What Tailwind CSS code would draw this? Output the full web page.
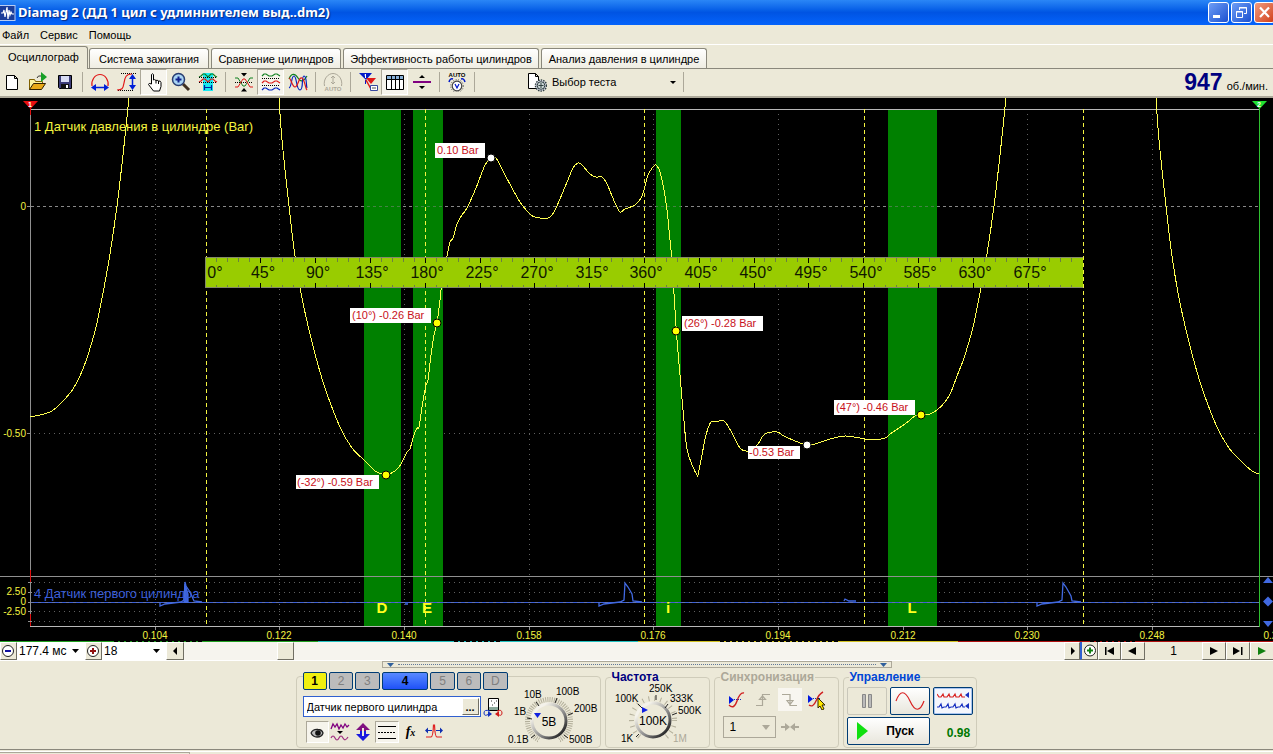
<!DOCTYPE html>
<html lang="ru">
<head>
<meta charset="utf-8">
<title>Diamag 2</title>
<script src="https://cdn.jsdelivr.net/npm/@tailwindcss/browser@4"></script>
</head>
<body class="min-h-screen flex flex-col overflow-x-hidden bg-[#ece9d8] text-black text-[11px] leading-[14px]" style="font-family:'Liberation Sans',Arial,sans-serif">

<!-- Title bar -->
<header class="h-[25px] flex items-center shrink-0 bg-linear-to-b from-[#2a86f6] via-[#0054e3] to-[#0563fb]">
  <svg class="w-4 h-4 shrink-0" viewBox="0 0 16 16"><rect x="-1" y=".5" width="16" height="15" fill="#1b3d9a" stroke="#b9cdf2"/><path d="M1 8h2l1-3 1 7 2-10 1 12 1-9 1 5 1-3 1 2h2" fill="none" stroke="#fff" stroke-width="1.2"/></svg>
  <h1 class="flex-1 pl-[2px] text-white font-bold text-[13px] leading-[25px] whitespace-nowrap [text-shadow:1px_1px_1px_#0a2a80]" style="font-family:'Noto Sans','Open Sans',sans-serif">Diamag 2 (ДД 1 цил с удлиннителем выд..dm2)</h1>
  <div class="flex gap-[2px] overflow-hidden w-[65px] shrink-0">
    <button aria-label="Свернуть" class="w-[21px] h-[21px] shrink-0 rounded-[3px] border border-white bg-linear-to-br from-[#6f9df5] to-[#1b4fd0]"><svg class="w-full h-full" viewBox="0 0 19 19"><rect x="4" y="12" width="7" height="3" fill="#fff"/></svg></button>
    <button aria-label="Восстановить" class="w-[21px] h-[21px] shrink-0 rounded-[3px] border border-white bg-linear-to-br from-[#6f9df5] to-[#1b4fd0]"><svg class="w-full h-full" viewBox="0 0 19 19" fill="none" stroke="#fff"><path d="M7.500 7V4.500h7v6H12M7 5h8M4.500 8.500h6v6h-6zM4 9h7"/></svg></button>
    <button aria-label="Закрыть" class="w-[21px] h-[21px] shrink-0 rounded-[3px] border border-white bg-linear-to-br from-[#f09a7c] to-[#d03c10]"><svg class="w-full h-full" viewBox="0 0 19 19" stroke="#fff" stroke-width="2.200"><path d="M5 4.500l9 9.500M14 4.500l-9 9.500"/></svg></button>
  </div>
</header>

<!-- Menu -->
<nav class="h-5 flex items-center gap-[11px] pl-[2px] shrink-0 border-b border-white">
  <a href="#">Файл</a><a href="#">Сервис</a><a href="#">Помощь</a>
</nav>

<!-- Tabs -->
<div role="tablist" class="h-6 flex items-end shrink-0 border-b border-[#8a887c] whitespace-nowrap">
  <button role="tab" aria-selected="true" class="w-[88px] h-[23px] -mb-px bg-[#ece9d8] border-t border-r border-[#8a887c] rounded-tr-[3px] pb-[2px]">Осциллограф</button>
  <button role="tab" class="ml-px w-[120px] h-5 bg-linear-to-b from-white to-[#efede2] border border-b-0 border-[#8a887c] rounded-t-[3px]">Система зажигания</button>
  <button role="tab" class="ml-[2px] w-[130px] h-5 bg-linear-to-b from-white to-[#efede2] border border-b-0 border-[#8a887c] rounded-t-[3px]">Сравнение цилиндров</button>
  <button role="tab" class="ml-[2px] w-[196px] h-5 bg-linear-to-b from-white to-[#efede2] border border-b-0 border-[#8a887c] rounded-t-[3px]">Эффективность работы цилиндров</button>
  <button role="tab" class="ml-[2px] w-[166px] h-5 bg-linear-to-b from-white to-[#efede2] border border-b-0 border-[#8a887c] rounded-t-[3px]">Анализ давления в цилиндре</button>
</div>

<!-- Toolbar -->
<div role="toolbar" class="h-[29px] flex items-center shrink-0 border-b-2 border-[#aca899] pb-px">
  <button aria-label="Новый" class="w-6 h-[26px] shrink-0 grid place-items-center"><svg class="w-5 h-5" viewBox="0 0 20 20"><path d="M4.500 3.500h8l3 3v11h-11zM12.500 3.500v3h3" fill="#fff" stroke="#000"/></svg></button>
  <button aria-label="Открыть" class="w-[27px] h-[26px] shrink-0 grid place-items-center"><svg class="w-5 h-5" viewBox="0 0 20 20"><path d="M1.500 17.500v-10h5l1 2h7v3" fill="#fbf3a0" stroke="#806000"/><path d="M1.500 17.500l4-6h12l-4 6z" fill="#e8a818" stroke="#302000"/><path d="M9 6q1-3 4-2" fill="none" stroke="#333"/><path d="M13 0l6 5-6 5z" fill="#18a028"/></svg></button>
  <button aria-label="Сохранить" class="w-[27px] h-[26px] shrink-0 grid place-items-center"><svg class="w-5 h-5" viewBox="0 0 20 20"><path d="M3.500 3.500h13v13h-12l-1-1z" fill="#3c3c78" stroke="#000"/><path d="M6 4h8v6H6z" fill="#d8dcf4"/><path d="M6 12h8v5H6z" fill="#111"/><path d="M11 13h2v3h-2z" fill="#fff"/></svg></button>
  <span class="w-2 h-5 shrink-0 flex justify-center"><i class="w-px bg-[#aca899]"></i></span>
  <button aria-label="Растянуть по ширине" class="w-[27px] h-[26px] shrink-0 grid place-items-center"><svg class="w-5 h-5" viewBox="0 0 20 20"><path d="M2 14C1 8 5 2.500 10 2.500S19 8 18 14" fill="none" stroke="#e01818" stroke-width="1.200"/><path d="M4 15.500h12" stroke="#0020d8" stroke-width="1.500"/><path d="M1 15.500l5-3.500v7zM19 15.500l-5-3.500v7z" fill="#0020d8"/></svg></button>
  <button aria-label="Растянуть по высоте" class="w-[27px] h-[26px] shrink-0 grid place-items-center"><svg class="w-5 h-5" viewBox="0 0 20 20"><path d="M4 1.500h15M1 18.500h16" stroke="#000" stroke-dasharray="1 1"/><path d="M0 18c5 0 6-1 7-7S9 2 15 2" fill="none" stroke="#e01818" stroke-width="1.200"/><path d="M15.500 6v8" stroke="#0020d8" stroke-width="1.500"/><path d="M15.500 2l3.500 5h-7zM15.500 18l3.500-5h-7z" fill="#0020d8"/></svg></button>
  <button aria-label="Рука" aria-pressed="true" class="w-[27px] h-[26px] shrink-0 grid place-items-center bg-[#f6f4ec] border border-[#aca899] border-r-white border-b-white"><svg class="w-5 h-5" viewBox="0 0 20 20"><path d="M7.500 12V2.500q1-1.500 2 0V8q1-1 2.500.500q1-.800 2.500.500q2-.500 2.500 1.500v4l-1.500 4.500h-6l-5-6.500q0-2 3-.500z" fill="#fff" stroke="#000"/><path d="M12 8.500v3M14.500 9v3" stroke="#000"/></svg></button>
  <button aria-label="Масштаб" class="w-[27px] h-[26px] shrink-0 grid place-items-center"><svg class="w-5 h-5" viewBox="0 0 20 20"><path d="M12 12l6 6" stroke="#403020" stroke-width="3"/><circle cx="7.500" cy="7.500" r="6" fill="#a8d4f4" stroke="#283c70" stroke-width="1.500"/><path d="M4.500 7.500h6M7.500 4.500v6" stroke="#10208c" stroke-width="2"/></svg></button>
  <button aria-label="Измерение" class="w-[27px] h-[26px] shrink-0 grid place-items-center"><svg class="w-5 h-5" viewBox="0 0 20 20"><path d="M5 1h10v18H5z" fill="#18e8f0"/><path d="M1 5l2-1 2-2h2l3 3 3-3h2l2 2 2 1" fill="none" stroke="#108020" stroke-width="1.200"/><path d="M1 10l2-1 2-2h2l3 3 3-3h2l2 2 2 1" fill="none" stroke="#e01818" stroke-width="1.200"/><path d="M1 5.500h18M1 10.500h18" stroke="#000" stroke-dasharray="1 1"/><path d="M6.500 13v5M13.500 13v5M7 15.500h6" stroke="#0020a0" stroke-width="1.200"/></svg></button>
  <span class="w-[9px] h-5 shrink-0 flex justify-center"><i class="w-px bg-[#aca899]"></i></span>
  <button aria-label="Совместить" class="w-[27px] h-[26px] shrink-0 grid place-items-center"><svg class="w-5 h-5" viewBox="0 0 20 20" fill="none"><path d="M1 10.500h18" stroke="#000" stroke-dasharray="1 1"/><path d="M1 6h3l3 5 2 3h2l2-3 3-5h3" stroke="#108020"/><path d="M1 15h3l3-5 2-3h2l2 3 3 5h3" stroke="#e01818"/><path d="M7 1h6l-3 3.500zM7 19.500h6L10 16z" fill="#000"/></svg></button>
  <button aria-label="Раздельно" aria-pressed="true" class="w-[27px] h-[26px] shrink-0 grid place-items-center bg-[#f6f4ec] border border-[#aca899] border-r-white border-b-white"><svg class="w-5 h-5" viewBox="0 0 20 20" fill="none" stroke-width="1.200"><path d="M1 4l2-2h2l3 2h3l3-2h2l3 2" stroke="#108020"/><path d="M1 11l2-2h2l3 2h3l3-2h2l3 2" stroke="#e01818"/><path d="M1 18l2-2h2l3 2h3l3-2h2l3 2" stroke="#0020c0"/><path d="M1 6.500h18M1 13.500h18" stroke="#000" stroke-dasharray="1 1" stroke-width="1"/></svg></button>
  <button aria-label="Наложить" class="w-[27px] h-[26px] shrink-0 grid place-items-center"><svg class="w-5 h-5" viewBox="0 0 20 20" fill="none" stroke-width="1.200"><path d="M1 7c2-6 6-6 9-1s6 3 9-2" stroke="#108020"/><path d="M1 16c3-1 2-12 5-12s2 14 6 14 1-14 4-14 2 10 3 12" stroke="#0020c0"/><path d="M1 6c2 0 3 9 6 9s4-11 7-9 3 10 5 12" stroke="#e01818"/></svg></button>
  <span class="w-2 h-5 shrink-0 flex justify-center"><i class="w-px bg-[#aca899]"></i></span>
  <button aria-label="Авто" disabled class="w-[27px] h-[26px] shrink-0 grid place-items-center"><svg class="w-5 h-5" viewBox="0 0 20 20" fill="none" stroke="#aca899"><path d="M1.500 14C0 7 5 1.500 10 1.500S20 7 18.500 14M10 4v8M8 6l2-2 2 2M8 10l2 2 2-2"/><text x="10" y="19" text-anchor="middle" font-size="6" font-weight="bold" fill="#aca899" stroke="none">AUTO</text></svg></button>
  <span class="w-2 h-5 shrink-0 flex justify-center"><i class="w-px bg-[#aca899]"></i></span>
  <button aria-label="Метки" class="w-[27px] h-[26px] shrink-0 grid place-items-center"><svg class="w-5 h-5" viewBox="0 0 20 20"><path d="M1 1h13L8 8z" fill="#0018c8"/><path d="M7.500 2v4M6.500 3h1" stroke="#fff"/><path d="M8 6h10l-5 6z" fill="#e01818"/><path d="M7.500 8v4" stroke="#0018c8"/><path d="M8 8l5 9" stroke="#e01818" stroke-width="1.500"/><path d="M12.500 13.500h7v5h-7z" fill="#fff" stroke="#3848a0"/><path d="M14 16h4" stroke="#555"/></svg></button>
  <button aria-label="Таблица" aria-pressed="true" class="w-[27px] h-[26px] shrink-0 grid place-items-center bg-[#f6f4ec] border border-[#aca899] border-r-white border-b-white"><svg class="w-5 h-5" viewBox="0 0 20 20"><path d="M1.500 3.500h17v14h-17z" fill="#fff" stroke="#000"/><path d="M2 4h16v3H2z" fill="#88b0d8"/><path d="M1.500 7.500h17M6.500 4v13.500M10.500 4v13.500M14.500 4v13.500" stroke="#000"/></svg></button>
  <button aria-label="Разделитель" class="w-[27px] h-[26px] shrink-0 grid place-items-center"><svg class="w-5 h-5" viewBox="0 0 20 20"><path d="M1 10h18" stroke="#800080" stroke-width="2"/><path d="M7 6h6l-3-3zM7 14h6l-3 3z"/></svg></button>
  <span class="w-2 h-5 shrink-0 flex justify-center"><i class="w-px bg-[#aca899]"></i></span>
  <button aria-label="Авторежим" class="w-[27px] h-[26px] shrink-0 grid place-items-center"><svg class="w-5 h-5" viewBox="0 0 20 20"><text x="10" y="5" text-anchor="middle" font-size="6" font-weight="bold">AUTO</text><circle cx="10" cy="14" r="4.800" fill="#fff" stroke="#404040" stroke-width="1.200"/><circle cx="10" cy="14" r="6.300" fill="none" stroke="#555" stroke-dasharray="1 1.500"/><path d="M8 12l2 4 2-4" fill="none" stroke="#0018c8" stroke-width="1.200"/><path d="M2 10q1-4 4-3M18 10q-1-4-4-3" fill="none" stroke="#0018c8" stroke-width="1.500"/></svg></button>
  <span class="w-2 h-5 shrink-0 flex justify-center"><i class="w-px bg-[#aca899]"></i></span>
  <button class="ml-[49px] w-[156px] h-[26px] shrink-0 flex items-center text-left whitespace-nowrap">
    <svg class="w-5 h-5" viewBox="0 0 20 20"><path d="M1.500 1.500h7l3 3v12h-10zM8.500 1.500v3h3" fill="#fff" stroke="#000"/><circle cx="14" cy="13.500" r="5.500" fill="#dde" stroke="#304040" stroke-width="1.500" stroke-dasharray="1.500 1"/><circle cx="14" cy="13.500" r="3.800" fill="#cdd8d8" stroke="#304040"/><path d="M14 11v5M11.500 13.500h5" stroke="#304040"/></svg>
    <span class="flex-1 pl-[5px]">Выбор теста</span>
    <svg class="w-2 h-2 mr-[6px] shrink-0" viewBox="0 0 8 8"><path d="M1 3h6L4 6z"/></svg>
  </button>
  <i class="w-px h-5 shrink-0 bg-[#aca899]"></i>
  <p class="flex-1 flex items-baseline justify-end gap-1 pr-[5px] whitespace-nowrap"><b class="text-[23px] leading-6 text-[#000080]">947</b> об./мин.</p>
</div>

<!-- Oscilloscope screen -->
<main class="bg-black">
<svg id="scope" class="block w-full h-auto" viewBox="0 98 1273 544" fill="none">
  <g shape-rendering="crispEdges">
    <g id="grid" stroke="#606060" stroke-dasharray="1 4"></g>
    <path d="M31 206.500H1259" stroke="#888" stroke-dasharray="3 3"/>
    <path d="M364 110h37v516h-37zM413 110h30v516h-30zM656 110h25v516h-25zM888 110h49v516h-49z" fill="#008000"/>
    <path d="M31 206.500H1259" stroke="#888" stroke-dasharray="3 3" opacity=".5"/>
    <path d="M30 109.500H1259M30 626.500H1259" stroke="#b8b8b8"/>
    <path d="M0 576.500H1273" stroke="#909090"/>
    <path d="M30.500 109V626" stroke="#909090"/>
    <path d="M30.500 106v9M30.500 570v12M30.500 614v12" stroke="#e01010"/>
    <path d="M1259.500 106V627" stroke="#30c030"/>
    <path stroke="#909090" d="M27 206.500h4M27 433.500h4M28 582.500h4M28 592.500h4M28 602.500h4M28 611.500h4M28 621.500h4"/>
    <g id="ticks" stroke="#909090"></g>
    <path stroke="#f4f440" stroke-dasharray="4 3" d="M206.500 109V626M425.500 109V626M644.500 109V626M864.500 109V626M1083.500 109V626"/>
    <path stroke="#3c5fd8" d="M31 602.500H1259"/>
    <path stroke="#8a8a8a" stroke-dasharray="3 4" opacity=".5" d="M31 602.500H1259"/>
  </g>
  <g stroke="#4169e1" stroke-width="1.300">
    <path d="M160 602v4l5-2 8-1 8-1 3-2 1-18 1 4 4 6 4 9 8 1"/><path d="M184 602l1-18 3 10v8z" fill="#4169e1"/>
    <path d="M599 602v4l5-2 8-1 8-1 4-2 1-17 3 4 4 7 1 7 9 1"/>
    <path d="M1037 602v4l5-2 8-1 8-1 4-2 1-17 3 4 5 9 1 5 9 1"/>
    <path d="M844 601l1-2 4 2h7M405 604h3"/>
  </g>
  <g id="curves" stroke="#ffff50" shape-rendering="crispEdges"></g>

  <path d="M23 101h15l-7.500 8z" fill="#e81010"/><path d="M1252 101h15l-7.500 8z" fill="#20e030"/>
  <g fill="#fff" font-size="7" font-weight="bold" text-anchor="middle"><text x="30" y="107">1</text><text x="1259" y="107">2</text></g>

  <g font-size="13"><text x="34" y="131" fill="#f4f440">1 Датчик давления в цилиндре (Bar)</text><text x="34" y="598" fill="#3c5fd8">4 Датчик первого цилиндра</text></g>
  <g fill="#f4f440" font-size="10" text-anchor="end"><text x="26" y="210">0</text><text x="26" y="437">-0.50</text><text x="26" y="595">2.50</text><text x="26" y="605">0</text><text x="26" y="615">-2.50</text></g>
  <g id="times" fill="#f4f440" font-size="10" text-anchor="middle"></g>
  <g fill="#ffff20" font-size="15" font-weight="bold" text-anchor="middle"><text x="382" y="613">D</text><text x="427" y="613">E</text><text x="668" y="613">i</text><text x="912" y="613">L</text></g>

  <!-- Degree ruler -->
  <path d="M205 257h878v31H205z" fill="#99cc00"/>
  <path d="M205 257.500h878M205 287.500h878M205.500 257v31" stroke="#858a68"/>
  <g id="ruler" shape-rendering="crispEdges"></g>
  <g id="degrees" fill="#101800" font-size="16" text-anchor="middle"></g>

  <!-- Markers -->
  <path fill="#fff" d="M435 143h50v15h-50zM350 308h81v15h-81zM682 316h81v15h-81zM834 400h81v15h-81zM296 475h83v14h-83zM748 446h52v13h-52z"/>
  <g fill="#c81020" font-size="11"><text x="437" y="154">0.10 Bar</text><text x="352" y="319">(10°) -0.26 Bar</text><text x="684" y="327">(26°) -0.28 Bar</text><text x="836" y="411">(47°) -0.46 Bar</text><text x="297" y="486">(-32°) -0.59 Bar</text><text x="749" y="456">-0.53 Bar</text></g>
  <g stroke="#000"><g fill="#fff"><circle cx="491" cy="158" r="4"/><circle cx="807" cy="445" r="4"/></g><g fill="#ffff00"><circle cx="437" cy="323" r="4"/><circle cx="676" cy="331" r="4"/><circle cx="386" cy="475" r="4"/><circle cx="921" cy="415" r="4"/></g></g>

  <path fill="#4169e1" d="M1263 583h10l-5-6zM1263 601.500l5-5 5 5-5 5zM1263 621h10l-5 6z"/>
  <g shape-rendering="crispEdges"><path d="M0 641.500h318" stroke="#20a020"/><path d="M318 641.500h320" stroke="#20c0c0"/><path d="M638 641.500h320" stroke="#d0c020"/><path d="M958 641.500h315" stroke="#b01010"/>
  <path d="M114 641.500h90M454 641.500h48M720 641.500h120M1090 641.500h45" stroke="#000" stroke-dasharray="4 2"/></g>
</svg>
</main>

<!-- Scroll row -->
<div class="h-[18px] flex items-stretch shrink-0 bg-[#f6f4ee] text-[12px]">
  <button aria-label="Уменьшить" class="w-[17px] bg-[#ece9d8] border border-white border-r-[#716f64] border-b-[#716f64]"><svg class="w-full h-full" viewBox="0 0 15 16"><circle cx="7" cy="8" r="5.500" fill="#fff" stroke="#222"/><path d="M4 8h6" stroke="#1010a0" stroke-width="2"/></svg></button>
  <div class="relative w-[68px] flex"><select aria-label="Длительность" class="w-full pl-[2px] bg-white appearance-none"><option>177.4 мс</option></select><svg class="absolute right-[6px] top-[7px] w-[7px] h-1" viewBox="0 0 7 4"><path d="M0 0h7L3.500 4z"/></svg></div>
  <button aria-label="Увеличить" class="w-[17px] bg-[#ece9d8] border border-white border-r-[#716f64] border-b-[#716f64]"><svg class="w-full h-full" viewBox="0 0 15 16"><circle cx="7" cy="8" r="5.500" fill="#fff" stroke="#222"/><path d="M4 8h6M7 5v6" stroke="#901010" stroke-width="2"/></svg></button>
  <div class="relative w-[64px] flex"><select aria-label="Кадры" class="w-full pl-[2px] bg-white appearance-none"><option>18</option></select><svg class="absolute right-[6px] top-[7px] w-[7px] h-1" viewBox="0 0 7 4"><path d="M0 0h7L3.500 4z"/></svg></div>
  <button aria-label="Влево" class="w-[18px] bg-[#ece9d8] border border-white border-r-[#716f64] border-b-[#716f64]"><svg class="w-full h-full" viewBox="0 0 16 16"><path d="M10 4v8L6 8z"/></svg></button>
  <div class="flex-1 pl-[93px] flex"><span class="w-[17px] bg-[#ece9d8] border border-white border-r-[#716f64] border-b-[#716f64]"></span></div>
  <button aria-label="Вправо" class="w-4 bg-[#ece9d8] border border-white border-r-[#716f64] border-b-[#716f64]"><svg class="w-full h-full" viewBox="0 0 14 16"><path d="M6 4v8l4-4z"/></svg></button>
  <button aria-label="Добавить" class="w-[18px] bg-[#ece9d8] border-l-2 border-l-[#3060d0] border-r border-r-[#716f64] border-b border-b-[#716f64]"><svg class="w-full h-full" viewBox="0 0 15 16"><circle cx="8" cy="8" r="5.500" fill="#fff" stroke="#222"/><path d="M5 8h6M8 5v6" stroke="#108010" stroke-width="2"/></svg></button>
  <button aria-label="В начало" class="w-[23px] bg-[#ece9d8] border border-white border-r-[#716f64] border-b-[#716f64]"><svg class="w-full h-full" viewBox="0 0 21 16"><path d="M6 4h1.500v8H6zM15 4v8L8 8z"/></svg></button>
  <button aria-label="Назад" class="w-[24px] bg-[#ece9d8] border border-white border-r-[#716f64] border-b-[#716f64]"><svg class="w-full h-full" viewBox="0 0 22 16"><path d="M14 4v8L6 8z"/></svg></button>
  <span class="w-[57px] bg-[#ece9d8] text-center leading-[18px]">1</span>
  <button aria-label="Вперёд" class="w-[24px] bg-[#ece9d8] border border-white border-r-[#716f64] border-b-[#716f64]"><svg class="w-full h-full" viewBox="0 0 22 16"><path d="M7 4v8l8-4z"/></svg></button>
  <button aria-label="В конец" class="w-[24px] bg-[#ece9d8] border border-white border-r-[#716f64] border-b-[#716f64]"><svg class="w-full h-full" viewBox="0 0 22 16"><path d="M6 4v8l7-4zM14 4h1.500v8H14z"/></svg></button>
  <button aria-label="Воспроизвести" class="w-[23px] bg-[#ece9d8] border-l border-t border-white border-b border-b-[#716f64]"><svg class="w-full h-full" viewBox="0 0 22 16"><path d="M7 4v8l8-4z" fill="#108010"/></svg></button>
</div>

<!-- Splitter -->
<div class="h-2 flex justify-center items-end shrink-0 border-t border-white">
  <div class="w-[510px] h-[7px] border border-[#aca899] flex items-center px-1 gap-1">
    <svg class="w-[7px] h-1 shrink-0" viewBox="0 0 7 4"><path d="M0 0h7L3.500 4z" fill="#30609c"/></svg><i class="flex-1 border-t border-dotted border-[#607898]"></i><svg class="w-[7px] h-1 shrink-0" viewBox="0 0 7 4"><path d="M0 0h7L3.500 4z" fill="#30609c"/></svg>
  </div>
</div>

<!-- Control panels -->
<div class="flex justify-center items-end gap-1 shrink-0 pt-[3px] pb-px pr-px border-b border-[#8a887c]">
  <section aria-label="Канал" class="w-[305px] h-[72px] border border-[#cfccba] rounded-[4px] flex">
    <div class="w-[211px] shrink-0 pl-[6px] flex flex-col -mt-[5px]">
      <div class="h-[20px] flex gap-[2px] bg-[#ece9d8] text-[12px]">
        <button class="w-[25px] h-[18px] border border-[#003c74] rounded-[2px] bg-[#f0f010] font-bold">1</button>
        <button class="w-[25px] h-[18px] border border-[#003c74] rounded-[2px] bg-[#bcbcbc] text-[#808080]">2</button>
        <button class="w-[25px] h-[18px] border border-[#003c74] rounded-[2px] bg-[#bcbcbc] text-[#808080]">3</button>
        <button class="w-[48px] h-[18px] border border-[#003c74] rounded-[2px] bg-linear-to-b from-[#5888ff] to-[#2050f8] font-bold">4</button>
        <button class="w-[25px] h-[18px] border border-[#003c74] rounded-[2px] bg-[#bcbcbc] text-[#808080]">5</button>
        <button class="w-[25px] h-[18px] border border-[#003c74] rounded-[2px] bg-[#bcbcbc] text-[#808080]">6</button>
        <button class="w-[25px] h-[18px] border border-[#003c74] rounded-[2px] bg-[#bcbcbc] text-[#808080]">D</button>
      </div>
      <div class="mt-[4px] -mr-2 flex items-center gap-[2px]">
        <div class="w-[178px] h-[21px] flex bg-white border border-[#3060d0] p-px">
          <input aria-label="Датчик" value="Датчик первого цилиндра" class="flex-1 min-w-0 pl-[2px] outline-none">
          <button class="w-[17px] bg-[#ece9d8] border border-white border-r-[#716f64] border-b-[#716f64] font-bold leading-[10px]">...</button>
        </div>
        <button aria-label="Настройка датчика"><svg class="w-5 h-5 block" viewBox="0 0 20 20"><path d="M5.500 1.500h10v12h-10z" fill="#fff" stroke="#000"/><path d="M6 10h9v3H6z" fill="#8aa89a"/><path d="M8 4h1M11 6h1M13 4h1M9 8h1" stroke="#333"/><path d="M7 14q-6-2-6 2t5 1" fill="none" stroke="#1030c0"/><path d="M5 14l4 3-4 3z" fill="#1030c0"/><path d="M14 14q5-2 5 2t-5 1" fill="none" stroke="#d01818"/><path d="M16 14l-4 3 4 3z" fill="#d01818"/></svg></button>
      </div>
      <div class="mt-[4px] pl-[3px] flex gap-px">
        <button aria-label="Видимость" aria-pressed="true" class="w-[23px] h-[22px] shrink-0 grid place-items-center bg-[#f6f4ec] border border-[#aca899] border-r-white border-b-white"><svg class="w-5 h-5" viewBox="0 0 20 20"><path d="M4 11q2-4 7-3.500 4 0 5 3.500-1 4-6 4-4 0-6-4" fill="#bbb" stroke="#222" stroke-width="1.300"/><circle cx="11" cy="11" r="2.800" fill="#111"/></svg></button>
        <button aria-label="Фильтр" class="w-[21px] h-[22px] shrink-0 grid place-items-center"><svg class="w-5 h-5" viewBox="0 0 20 20"><path d="M1 7l2-5 2 3 2-3 2 5 2-4 2 3 2-4 2 3 2-2" stroke="#800080" stroke-width="1.300" fill="none"/><path d="M7 9h6l-3 3z"/><path d="M1 16q2-4 4 0t4 0 4 0 5-1" stroke="#a03080" stroke-width="1.200" fill="none"/></svg></button>
        <button aria-label="Инверсия" class="w-[22px] h-[22px] shrink-0 grid place-items-center"><svg class="w-5 h-5" viewBox="0 0 20 20"><path d="M10 1l7 7h-4v3H7V8H3z" fill="#801080"/><path d="M10 19l7-7h-4V9H7v3H3z" fill="#1818e0"/><path d="M10 6v8" stroke="#ece9d8" stroke-width="2"/></svg></button>
        <button aria-label="Уровни" aria-pressed="true" class="w-[24px] h-[22px] shrink-0 grid place-items-center bg-[#f6f4ec] border border-[#aca899] border-r-white border-b-white"><svg class="w-5 h-5" viewBox="0 0 20 20"><path d="M1 4.500h18M1 16.500h18" stroke="#000"/><path d="M1 10.500h18" stroke="#000" stroke-dasharray="2 1"/></svg></button>
        <button aria-label="Функция" class="w-[22px] h-[22px] shrink-0 text-[14px] italic font-bold leading-5" style="font-family:'Liberation Serif',serif">f<span class="text-[10px]">x</span></button>
        <button aria-label="Сдвиг" class="w-[22px] h-[22px] shrink-0 grid place-items-center"><svg class="w-5 h-5" viewBox="0 0 20 20"><path d="M2 15h5q2 0 2.500-12h1Q11 15 13 15h5" fill="none" stroke="#e02020" stroke-width="1.200"/><path d="M3 8.500h5M12 8.500h6" stroke="#1030b0"/><path d="M1 8.500l3-3v6zM19 8.500l-3-3v6z" fill="#1030b0"/></svg></button>
      </div>
    </div>
    <svg class="w-[92px] h-[62px] mt-[7px]" viewBox="508 684 92 62" font-size="10">
      <defs><linearGradient id="ring" x1="0" y1="0" x2="1" y2="1"><stop offset=".2" stop-color="#f4f2ea"/><stop offset=".6" stop-color="#888"/><stop offset="1" stop-color="#000"/></linearGradient></defs>
      <circle cx="549" cy="721" r="21.500" fill="none" stroke="#b4b09c" stroke-width="5" stroke-dasharray="1 1.200"/>
      <path d="M538 746h22v-6l-11-6-11 6z" fill="#ece9d8"/>
      <circle cx="549" cy="721" r="17" fill="#ece9d8" stroke="url(#ring)" stroke-width="3"/>
      <path d="M534 713h7l-3.500 5z" fill="#1020e0"/>
      <path d="M535 735l-4 3M527 718l5 1M536 702l3 4M557 698l-2 5M573 713l-5 2M564 735l4 3" stroke="#222"/>
      <text x="549" y="726" text-anchor="middle" font-size="12">5В</text>
      <text x="524" y="698">10В</text><text x="556" y="695">100В</text><text x="574" y="712">200В</text><text x="569" y="743">500В</text><text x="508" y="743">0.1В</text><text x="514" y="715">1В</text>
    </svg>
  </section>

  <fieldset class="w-[105px] h-[77px] border border-[#cfccba] rounded-[4px]">
    <legend class="ml-[5px] px-px text-[12px] leading-[12px] font-bold text-[#000080]">Частота</legend>
    <svg class="w-full h-[62px]" viewBox="605 684 103 62" font-size="10">
      <circle cx="652" cy="721" r="21.500" fill="none" stroke="#b4b09c" stroke-width="5" stroke-dasharray="1 5"/>
      <path d="M641 746h22v-6l-11-6-11 6z" fill="#ece9d8"/>
      <circle cx="652" cy="721" r="17" fill="#ece9d8" stroke="url(#ring)" stroke-width="3"/>
      <path d="M641 708l6 3-6 3z" fill="#1020e0"/>
      <path d="M638 735l-3 3M637 705l4 4M655 696v5M667 705l-3 4M676 714l-5 2" stroke="#222"/>
      <text x="652" y="726" text-anchor="middle" font-size="12">100K</text>
      <text x="648" y="693">250K</text><text x="614" y="703">100K</text><text x="669" y="703">333K</text><text x="677" y="715">500K</text><text x="620" y="743">1K</text><text x="672" y="743" fill="#aca899">1M</text>
    </svg>
  </fieldset>

  <fieldset class="w-[125px] h-[77px] border border-[#cfccba] rounded-[4px]">
    <legend class="ml-[5px] px-px text-[12px] leading-[12px] font-bold text-[#aca899]">Синхронизация</legend>
    <div class="mt-[5px] pl-[9px] flex gap-[3px]">
      <button aria-label="Уровень" class="w-6 h-[23px] grid place-items-center"><svg class="w-5 h-5" viewBox="0 0 20 20"><path d="M4 9.500h11" stroke="#1030c0" stroke-dasharray="1 1"/><path d="M3 15q5 5 8-4t7-8" fill="none" stroke="#d02020" stroke-width="1.400"/><path d="M3 6v8l5-4z" fill="#0018e0"/></svg></button>
      <button aria-label="По фронту" disabled class="w-6 h-[23px] grid place-items-center"><svg class="w-5 h-5" viewBox="0 0 20 20"><path d="M3 15.500h6.500v-11H17M6.500 9.500h6L9.500 6z" fill="none" stroke="#aca899" stroke-width="1.200"/></svg></button>
      <button aria-label="По спаду" disabled class="w-6 h-[23px] grid place-items-center bg-[#f8f6f0]"><svg class="w-5 h-5" viewBox="0 0 20 20"><path d="M2 4.500h8v11h7M7 10.500h6l-3 4z" fill="none" stroke="#aca899" stroke-width="1.200"/></svg></button>
      <button aria-label="Выбор уровня" class="w-6 h-[23px] grid place-items-center"><svg class="w-5 h-5" viewBox="0 0 20 20"><path d="M2 8.500h12" stroke="#1030c0" stroke-dasharray="1 1"/><path d="M2 15q4 3 7-4t7-9" fill="none" stroke="#d02020" stroke-width="1.400"/><path d="M1 5v8l5-4z" fill="#0018e0"/><path d="M11 8v10l2-2 2 4 2-1-2-4h3z" fill="#ffe800" stroke="#332800"/></svg></button>
    </div>
    <div class="mt-[5px] pl-2 flex items-center gap-1">
      <div class="relative"><select aria-label="Канал синхронизации" disabled class="w-[53px] h-[22px] pl-[6px] text-[12px] text-black opacity-100 bg-[#ece9d8] border border-[#aca899] appearance-none"><option>1</option></select><svg class="absolute right-[6px] top-[9px] w-2 h-[5px]" viewBox="0 0 8 5"><path d="M0 0h8L4 5z" fill="#aca899"/></svg></div>
      <svg class="w-5 h-5" viewBox="0 0 20 20"><path d="M1 9h4V6l5 4-5 4v-3H1zM19 9h-4V6l-5 4 5 4v-3h4z" fill="#aca899"/></svg>
    </div>
  </fieldset>

  <fieldset class="w-[134px] h-[77px] border border-[#cfccba] rounded-[4px]">
    <legend class="ml-[5px] px-px text-[12px] leading-[12px] font-bold text-[#0046d5]">Управление</legend>
    <div class="mt-1 pl-[3px] grid grid-cols-[40px_40px_40px] gap-x-[3px] gap-y-[2px]">
      <button aria-label="Пауза" disabled class="h-7 border border-[#c9c7ba] rounded-[2px] grid place-items-center"><svg class="w-5 h-5" viewBox="0 0 20 20"><path d="M5.500 3.500h3v13h-3zM11.500 3.500h3v13h-3z" fill="#bbb" stroke="#888"/></svg></button>
      <button aria-label="Синус" class="h-7 border border-[#003c74] rounded-[2px] grid place-items-center bg-linear-to-b from-white to-[#e8e6dc]"><svg class="w-8 h-5" viewBox="0 0 32 20"><path d="M2 10C6-1 11-1 16 10s10 11 14 0" fill="none" stroke="#d82020" stroke-width="1.200"/></svg></button>
      <button aria-label="Осциллограммы" class="h-7 border border-[#003c74] rounded-[2px] grid place-items-center bg-[#f4f6fc] shadow-[inset_0_0_0_1px_#a8c4f0]"><svg class="w-8 h-5" viewBox="0 0 32 20" fill="none"><path d="M0 3l2 3h2l2-3 1 3h3l2-3 1 3h3l2-3 1 3h3l2-3 1 3h3" stroke="#d82020" stroke-width="1.200"/><path d="M0 16h2l2-3 1 4 2-1h2l2-3 1 4 2-1h2l2-3 1 4 2-1h2l2-3 1 3h2" stroke="#1830c0" stroke-width="1.200"/><path d="M32 1v6l-4-3zM32 12v6l-4-3z" fill="#1830c0"/></svg></button>
      <button class="col-span-2 h-7 border border-[#003c74] rounded-[2px] flex items-center bg-linear-to-b from-white to-[#e8e6dc] font-bold text-[12px]"><svg class="ml-[9px] w-[11px] h-[18px]" viewBox="0 0 11 18"><path d="M0 0v18l11-9z" fill="#10e010"/></svg><span class="flex-1 pl-1">Пуск</span></button>
      <output class="flex items-center justify-center pt-1 pl-3 font-bold text-[12px] text-[#007800]">0.98</output>
    </div>
  </fieldset>
</div>
<footer class="flex-1 mt-px border-t border-white"><div class="w-[190px] h-[3px] border-t border-r border-[#aca899]"></div></footer>

<script>
const NS = 'http://www.w3.org/2000/svg';
const put = (id, tag, attrs, text) => {
  const el = document.createElementNS(NS, tag);
  for (const k in attrs) el.setAttribute(k, attrs[k]);
  if (text) el.textContent = text;
  document.getElementById(id).append(el);
};
// Time grid
[155, 279, 404, 529, 653, 778, 903, 1027, 1152, 1276].forEach((x, i) => {
  if (i < 9) {
    put('grid', 'path', {d: `M${x}.5 114V626`});
    put('ticks', 'path', {d: `M${x}.5 627v3`});
  }
  put('times', 'text', {x, y: 639}, (0.104 + 0.018 * i).toFixed(3));
});
[433, 582, 592, 611, 621].forEach(y => put('grid', 'path', {d: `M34 ${y}.5H1259`}));
// Ruler
for (let i = 1; i < 80; i++) {
  const x = Math.floor(206 + i * 10.96) + .5, big = i % 5 === 0;
  put('ruler', 'path', {d: big ? `M${x} 258v5M${x} 283v5` : `M${x} 258v4M${x} 285v2`, stroke: big ? '#000' : '#6c8040'});
}
for (let i = 0; i < 16; i++) put('degrees', 'text', {x: i ? 208 + Math.round(i * 54.8) : 215, y: 278}, i * 45 + '°');
// Smooth traces through sampled points
const traces = [
  [30,417,40,415,50,412,57,407,65,399,73,389,80,376,87,358,96,327,103,293,110,254,117,206,123,155,129,98],
  [279,98,282,140,289,206,295,256,303,303,314,350,325,388,340,427,352,448,364,460,375,471,382,474,386,475,395,471,401,464,407,452,410,449,413,438,417,428,419,427,423,401,426,385,428,380,431,355,434,335,437,323,440,300,442,280,444,266,447,256,450,242,453,238,457,224,462,215,467,208,476,188,485,165,491,158,496,158,505,175,520,202,530,214,535,217,548,218,555,210,565,187,573,168,578,163,582,165,590,174,596,177,602,177,607,184,615,203,620,212,625,209,635,205,641,198,644,190,648,175,653,167,656,165,660,172,664,190,667,210,670,240,672,262,675,310,677,340,680,375,683,410,687,449,693,467,697,475,698,475,702,455,706,435,711,422,716,422,724,421,732,433,740,448,746,451,752,451,758,444,765,434,777,432,784,436,800,443,807,445,815,444,830,439,845,436,860,438,872,440,885,438,890,434,905,424,915,416,921,415,930,414,937,410,945,402,951,392,957,376,964,358,973,327,980,293,987,254,994,206,1000,155,1006,98],
  [1156,98,1159,140,1166,206,1172,256,1180,303,1191,350,1202,388,1217,427,1229,448,1241,461,1252,471,1259,474]
];
for (const t of traces) {
  const p = [];
  for (let i = 0; i < t.length; i += 2) p.push([t[i], t[i + 1]]);
  let d = `M${p[0]}`;
  for (let i = 0; i < p.length - 1; i++) {
    const a = p[i - 1] || p[i], b = p[i], c = p[i + 1], e = p[i + 2] || c;
    d += `C${b[0] + (c[0] - a[0]) / 6} ${b[1] + (c[1] - a[1]) / 6} ${c[0] - (e[0] - b[0]) / 6} ${c[1] - (e[1] - b[1]) / 6} ${c}`;
  }
  put('curves', 'path', {d});
}
</script>
</body>
</html>
